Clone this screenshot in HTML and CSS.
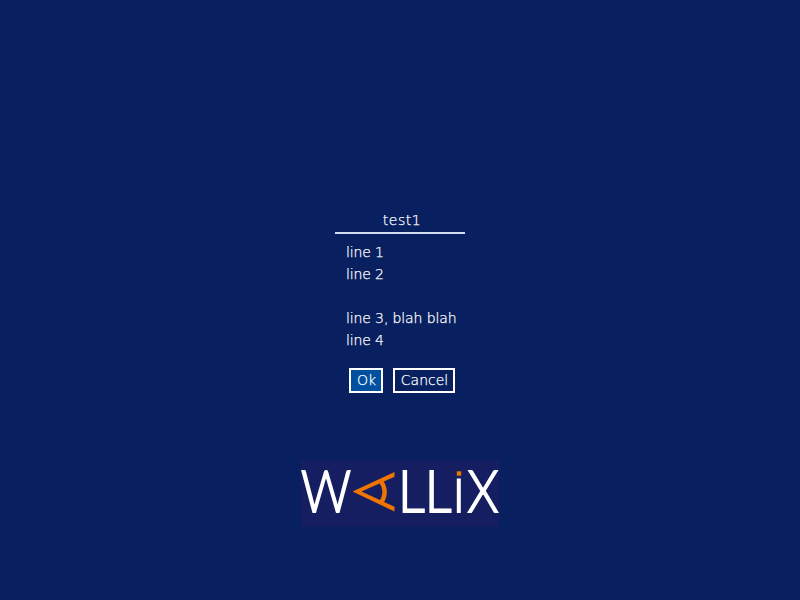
FILE: index.html
```html
<!DOCTYPE html>
<html lang="en">
<head>
<meta charset="utf-8">
<title>test1</title>
<link rel="stylesheet" href="styles.css">
</head>
<body>
<main class="screen">
  <section class="dialog">
    <h1 class="title">test1</h1>
    <div class="message">
      <p>line 1</p>
      <p>line 2</p>
      <p>&nbsp;</p>
      <p>line 3, blah blah</p>
      <p>line 4</p>
    </div>
    <div class="actions">
      <button class="button button-focus">Ok</button>
      <button class="button button-cancel">Cancel</button>
    </div>
  </section>
  <div class="logo">
    <svg width="198" height="67" viewBox="0 0 198 67" role="img" aria-label="Wallix">
      <rect width="198" height="67" fill="#141e60"/>
      <g class="wordmark">
        <text x="0" y="52.200" textLength="50" lengthAdjust="spacingAndGlyphs">W</text>
        <text x="97" y="52.200" textLength="53.500" lengthAdjust="spacingAndGlyphs">LL</text>
        <text x="166.500" y="52.200" textLength="31" lengthAdjust="spacingAndGlyphs">X</text>
      </g>
      <rect x="155.800" y="18.500" width="4" height="34.500" fill="#fff"/>
      <rect x="155.800" y="11.300" width="4.400" height="4.400" fill="#ee7600"/>
      <path d="M51.500 31.500L93.500 12V16.800L60.500 31.500L93.500 46.800V51.500Z" fill="#ee7600"/>
      <path d="M79.500 20.500Q87.500 31.500 80 43" fill="none" stroke="#ee7600" stroke-width="4.400"/>
    </svg>
  </div>
</main>
</body>
</html>
```
FILE: styles.css
```css
* { box-sizing: border-box; }
body { margin: 0; background: #081f60; color: #fff; font: 200 14px/22px "DejaVu Sans Light", "DejaVu Sans", sans-serif; -webkit-text-stroke: .25px #fff; }
.screen { height: 600px; padding-top: 209px; display: flex; flex-direction: column; align-items: center; }
.dialog { width: 130px; }
.title { margin: 0; height: 25px; font-size: 14px; font-weight: 200; line-height: 22px; letter-spacing: .5px; text-align: center; border-bottom: 2px solid #d3ddf0; padding-left: 4px; }
.message { margin: 7px 0 0 11px; white-space: nowrap; letter-spacing: -.12px; }
.message p { margin: 0; }
.actions { display: flex; gap: 10px; margin: 17px 0 0 14px; }
.button { flex: none; width: 34px; height: 25px; padding: 0 0 0 1px; border: 2px solid #fff; background: transparent; color: inherit; font: inherit; line-height: 21px; }
.button-cancel { width: 62px; }
.button-focus { background: #0050a0; }
.logo { margin-top: 67px; height: 67px; }
.logo svg { display: block; overflow: visible; }
.wordmark { fill: #fff; stroke: #fff; stroke-width: 1.8px; font: 300 56.5px Lato, sans-serif; -webkit-text-stroke: 1.8px #fff; }
```
